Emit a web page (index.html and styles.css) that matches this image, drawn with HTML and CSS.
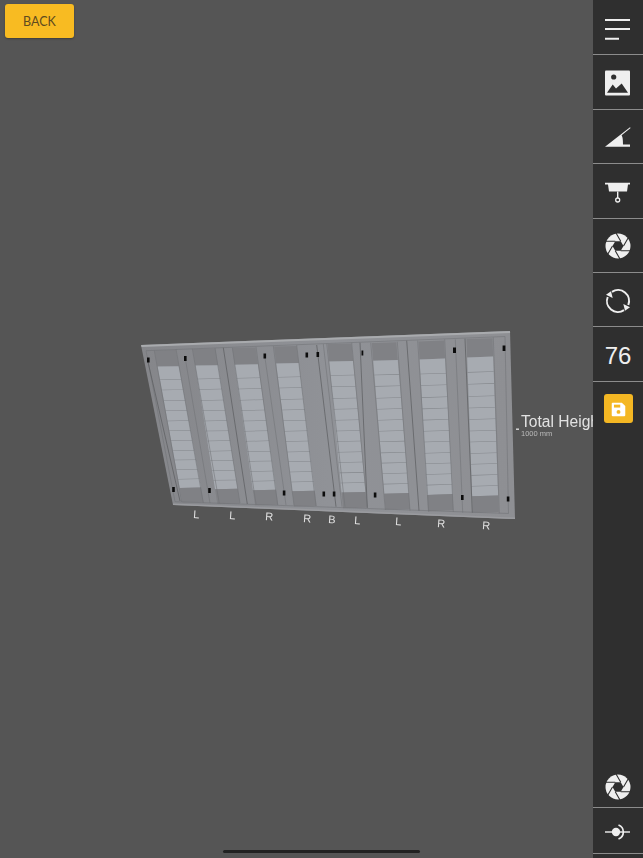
FILE: index.html
```html
<!DOCTYPE html>
<html lang="en">
<head>
<meta charset="utf-8">
<title>Total Height</title>
<link rel="stylesheet" href="styles.css">
</head>
<body>
<div class="app">
  <main class="stage">
    <button class="back">BACK</button>
    <svg class="scene" viewBox="0 0 593 858" width="593" height="858">
      <defs>
        <linearGradient id="panelFill" x1="0" x2="1" y1="0" y2="0">
          <stop offset="0" stop-color="#85868a"/>
          <stop offset=".5" stop-color="#909297"/>
          <stop offset="1" stop-color="#8e8f93"/>
        </linearGradient>
        <g id="col">
          <rect class="block" x="0" y="-13.3" width="100" height="13.3"/>
          <rect class="gap" x="0" y="0" width="100" height="100"/>
          <rect class="slat" x="0" y="0" width="100" height="10.6"/>
          <rect class="slat" x="0" y="11" width="100" height="8.1"/>
          <rect class="slat" x="0" y="19.5" width="100" height="8.5"/>
          <rect class="slat" x="0" y="28.4" width="100" height="7.9"/>
          <rect class="slat" x="0" y="36.7" width="100" height="7.9"/>
          <rect class="slat" x="0" y="45" width="100" height="7.8"/>
          <rect class="slat" x="0" y="53.2" width="100" height="7.6"/>
          <rect class="slat" x="0" y="61.2" width="100" height="7.9"/>
          <rect class="slat" x="0" y="69.5" width="100" height="7.3"/>
          <rect class="slat" x="0" y="77.2" width="100" height="7.6"/>
          <rect class="slat" x="0" y="85.2" width="100" height="7.4"/>
          <rect class="slat" x="0" y="93" width="100" height="7"/>
          <rect class="block" x="0" y="100" width="100" height="12"/>
        </g>
      </defs>

      <polygon class="panel" points="141,345 510,331 515,519 173,505"/>
      <polygon class="edge-top" points="141,345 510,331 510.1,333 141.5,347"/>
      <polygon class="edge-bottom" points="173,503.5 515,517.5 515,519 173,505"/>

      <use href="#col" transform="matrix(.212 -.0035 .222 1.2135 157.55 366.55)"/>
      <use href="#col" transform="matrix(.2265 -.0035 .1965 1.2365 195.34 365.53)"/>
      <use href="#col" transform="matrix(.232 -.005 .182 1.255 234.7 364.75)"/>
      <use href="#col" transform="matrix(.226 -.005 .16 1.278 276.2 363.45)"/>
      <use href="#col" transform="matrix(.2395 -.005 .1235 1.311 329.17 361.45)"/>
      <use href="#col" transform="matrix(.246 -.007 .11 1.33 373.2 360.7)"/>
      <use href="#col" transform="matrix(.255 -.008 .075 1.355 419.6 359.4)"/>
      <use href="#col" transform="matrix(.26 -.008 .05 1.388 467.15 357.4)"/>

      <path class="line" d="M146 350.7 505 336.5M146 350.7 175 501.7M175 501.7 508.5 513.5M505 336.5 508.5 513.5M154.3 350.7 181.7 502M176 349 203.3 503M185 357 210 503M192.3 348.7 219.3 503.3M215 348 240 503M232.3 347.7 256 504M256 346.7 277.7 505M265 358 286 505M273.3 346 294 505.3M296.7 345 316 506M323.3 344 342 506.7M326.7 343.7 345 506.7M351.7 342.7 367.3 506.7M370.7 342.7 385.3 510M397.3 341.7 410 510.7M417.7 340.7 428.7 511.7M444.7 339.3 453.3 512M455.3 339.3 462.7 512.7M493.3 337.3 499.3 513.3"/>
      <path class="line-dark" d="M148 362 180 501M223.3 347.7 247.3 504M316.7 345 336 506.7M360 342.7 367.3 508M406.7 340.7 419 510.7M465 338.7 472.3 512.7"/>

      <path class="marks" d="M147 357.5h2.6v5h-2.6zM184 356h2.6v5h-2.6zM263.5 353.5h2.6v5h-2.6zM305.5 352.5h2.6v5h-2.6zM316.5 352h2.6v5h-2.6zM361.5 350.5h1.8v5h-1.8zM453 347.5h3v5.5h-3zM502.6 345.5h2.8v5.5h-2.8zM172.2 487h2.6v5h-2.6zM208.2 488h2.6v5h-2.6zM282.8 490.5h2.6v5h-2.6zM322.5 491.5h2.6v5h-2.6zM332.8 491.5h2.6v5h-2.6zM373.8 492.5h2.6v5h-2.6zM461 495h2.6v5h-2.6zM506.8 496.5h2.6v5h-2.6z"/>

      <text class="tag" x="193" y="518" transform="rotate(4 193 518)">L</text>
      <text class="tag" x="229" y="519" transform="rotate(4 229 519)">L</text>
      <text class="tag" x="265" y="520" transform="rotate(4 265 520)">R</text>
      <text class="tag" x="303" y="522" transform="rotate(4 303 522)">R</text>
      <text class="tag" x="328" y="523" transform="rotate(4 328 523)">B</text>
      <text class="tag" x="354" y="524" transform="rotate(4 354 524)">L</text>
      <text class="tag" x="395" y="525" transform="rotate(4 395 525)">L</text>
      <text class="tag" x="437" y="527" transform="rotate(4 437 527)">R</text>
      <text class="tag" x="482" y="529" transform="rotate(4 482 529)">R</text>

      <rect class="tick" x="516" y="428.5" width="3" height="1.4"/>
      <text class="dim-title" x="521" y="426.5">Total Height</text>
      <text class="dim-value" x="521" y="435.5">1000 mm</text>
    </svg>
    <div class="home-bar"></div>
  </main>

  <aside class="rail">
    <div class="rail-group">
      <div class="tool">
        <svg class="icon" viewBox="0 0 30 30"><path class="stroke" d="M2 6h25M2 15h25M2 24.7h14"/></svg>
      </div>
      <div class="tool">
        <svg class="icon" viewBox="0 0 30 30">
          <rect class="fill" x="2" y="2.5" width="25" height="25" rx="1"/>
          <circle class="cut" cx="10.7" cy="9" r="2.6"/>
          <polygon class="cut" points="4,24.8 9.7,16.5 13,20.5 18.7,15.5 25,24.8"/>
        </svg>
      </div>
      <div class="tool">
        <svg class="icon" viewBox="0 0 30 30">
          <path class="fill" d="M27 5.3 27.6 6 18.6 13.2C19.6 15 20 17 20 22.5H27V24.7H2Z"/>
        </svg>
      </div>
      <div class="tool">
        <svg class="icon" viewBox="0 0 30 30">
          <path class="fill" d="M2 5.7H27V7.5H25L24 14.5H6L5 7.5H2Z"/>
          <path class="stroke-thin" d="M14.7 14.5V21"/>
          <circle class="ring" cx="14.7" cy="23" r="2"/>
        </svg>
      </div>
      <div class="tool">
        <svg class="icon" viewBox="0 0 30 30">
          <circle class="fill" cx="15" cy="15" r="12.5"/>
          <g class="blades">
            <polygon class="cut" points="20.5,15 17.75,19.76 12.25,19.76 9.5,15 12.25,10.24 17.75,10.24"/>
            <path d="M20.5 15 26 5.5M17.75 19.76 28.7 19.76M12.25 19.76 17.7 29.2M9.5 15 4 24.5M12.25 10.24 1.3 10.24M17.75 10.24 12.3 .8"/>
          </g>
        </svg>
      </div>
      <div class="tool">
        <svg class="icon" viewBox="0 0 30 30">
          <path class="stroke-round" d="M9 5.8A11 11 0 0 1 25.3 19M21 24.2A11 11 0 0 1 4.7 11"/>
          <polygon class="fill" points="20.3,18 27,21.3 22,24.7"/>
          <polygon class="fill" points="9.7,12 3,8.7 8,5.3"/>
        </svg>
      </div>
      <div class="tool tool-value">76</div>
      <div class="tool tool-plain">
        <button class="save" aria-label="Save">
          <svg class="icon" viewBox="0 0 30 30">
            <path class="fill" d="M9 8.5H18.5L22 12V21.5A1 1 0 0 1 21 22.5H9A1 1 0 0 1 8 21.5V9.5A1 1 0 0 1 9 8.5Z"/>
            <rect class="hole" x="10.3" y="10.5" width="6.5" height="3"/>
            <circle class="hole" cx="15" cy="18" r="2"/>
          </svg>
        </button>
      </div>
    </div>
    <div class="rail-group">
      <div class="tool tool-low">
        <svg class="icon" viewBox="0 0 30 30">
          <circle class="fill" cx="15" cy="15" r="12.5"/>
          <g class="blades">
            <polygon class="cut" points="20.5,15 17.75,19.76 12.25,19.76 9.5,15 12.25,10.24 17.75,10.24"/>
            <path d="M20.5 15 26 5.5M17.75 19.76 28.7 19.76M12.25 19.76 17.7 29.2M9.5 15 4 24.5M12.25 10.24 1.3 10.24M17.75 10.24 12.3 .8"/>
          </g>
        </svg>
      </div>
      <div class="tool tool-end">
        <svg class="icon" viewBox="0 0 30 30">
          <path class="stroke-thin" d="M2 15H27"/>
          <circle class="fill" cx="13" cy="15" r="4.2"/>
          <path class="stroke-arc" d="M15.5 8A7.5 7.5 0 0 1 15.5 22"/>
        </svg>
      </div>
    </div>
  </aside>
</div>
</body>
</html>
```

FILE: styles.css
```css
* { box-sizing: border-box; }

html, body {
  margin: 0;
  height: 100%;
  overflow: hidden;
  background: #555555;
}

.app {
  display: flex;
  width: 643px;
  height: 858px;
  font-family: "Liberation Sans", Arial, sans-serif;
}

.stage {
  position: relative;
  flex: 1;
  overflow: hidden;
  background: #555555;
}

.scene { display: block; filter: blur(.45px); }

.back {
  position: absolute;
  left: 5px;
  top: 4px;
  width: 69px;
  height: 34px;
  padding: 1px 0 0;
  border: 0;
  border-radius: 3px;
  background: #f8bb22;
  box-shadow: 0 1px 2px rgba(0, 0, 0, .3);
  color: #5f4a1f;
  font: 400 12.5px Lato, "Liberation Sans", sans-serif;
}

.home-bar {
  position: absolute;
  left: 223px;
  bottom: 5px;
  width: 197px;
  height: 3px;
  border-radius: 2px;
  background: #222222;
}

.panel { fill: url(#panelFill); }
.edge-top { fill: #a9abae; }
.edge-bottom { fill: #9a9b9f; }
.block { fill: #808185; }
.gap { fill: #85888d; }
.slat { fill: #a7abb1; }
.line { fill: none; stroke: #707175; stroke-width: .55; }
.line-dark { fill: none; stroke: #5a5b5f; stroke-width: .7; }
.marks { fill: #0c0c0c; }

.tag { fill: #e0e0e0; font-size: 11px; }
.tick { fill: #dddddd; }
.dim-title { fill: #e2e2e2; font-size: 15.6px; }
.dim-value { fill: #bcbcbc; font-size: 7.5px; }

.rail {
  display: flex;
  flex-direction: column;
  justify-content: space-between;
  width: 50px;
  padding-top: 1px;
  padding-bottom: 4px;
  background: #2f2f2f;
}

.rail-group { display: flex; flex-direction: column; }

.tool {
  display: flex;
  align-items: center;
  justify-content: center;
  height: 54.4px;
  padding-top: 2px;
  border-bottom: 1px solid #8c8c8c;
}

.tool-value {
  padding-top: 4px;
  color: #efefef;
  font-size: 24px;
}

.tool-plain { border-bottom: 0; padding-top: 0; }
.tool-low { height: 42px; padding-top: 0; }
.tool-end { height: 46px; padding-top: 3px; }

.icon { display: block; width: 30px; height: 30px; filter: blur(.25px); }

.fill { fill: #efefef; }
.cut { fill: #2f2f2f; }
.stroke { fill: none; stroke: #efefef; stroke-width: 2; }
.stroke-thin { fill: none; stroke: #efefef; stroke-width: 1.4; }
.stroke-round { fill: none; stroke: #efefef; stroke-width: 2; }
.stroke-arc { fill: none; stroke: #efefef; stroke-width: 1.7; }
.ring { fill: none; stroke: #efefef; stroke-width: 1.3; }
.blades path { fill: none; stroke: #2f2f2f; stroke-width: 1.1; }

.save {
  display: flex;
  align-items: center;
  justify-content: center;
  width: 29px;
  height: 29px;
  padding: 0;
  border: 0;
  border-radius: 3px;
  background: #f4b723;
}

.save .fill { fill: #ffffff; }
.hole { fill: #f4b723; }
```
